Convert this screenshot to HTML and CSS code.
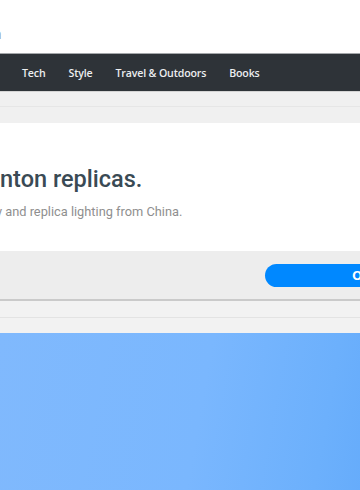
FILE: index.html
```html
<!DOCTYPE html>
<html lang="en">
<head>
<meta charset="utf-8">
<title>Replicas</title>
<link rel="stylesheet" href="styles.css">
</head>
<body>
<header class="masthead">
  <span class="site-title">n</span>
</header>
<nav class="nav">
  <a class="nav-item" href="#">Tech</a>
  <a class="nav-item" href="#">Style</a>
  <a class="nav-item" href="#">Travel &amp; Outdoors</a>
  <a class="nav-item" href="#">Books</a>
</nav>
<div class="band">
  <div class="band-row band-row--top"></div>
  <div class="band-row band-row--bottom"></div>
</div>
<section class="card">
  <h1 class="card-title">nton replicas.</h1>
  <p class="card-sub">y and replica lighting from China.</p>
</section>
<div class="strip">
  <a class="btn" href="#">Open</a>
</div>
<div class="band band--lower">
  <div class="band-row band-row--top2"></div>
  <div class="band-row band-row--bottom2"></div>
</div>
<div class="hero"></div>
</body>
</html>
```
FILE: styles.css
```css
html, body {
  margin: 0;
  padding: 0;
  width: 360px;
  height: 490px;
  overflow: hidden;
  background: #ffffff;
  font-family: "Open Sans", "Liberation Sans", sans-serif;
}

.masthead {
  height: 53px;
  background: #ffffff;
  display: flex;
  align-items: flex-start;
}

.site-title {
  display: block;
  margin-top: 26px;
  margin-left: -7px;
  font-family: "Open Sans", sans-serif;
  font-size: 14px;
  line-height: 16px;
  color: #8a8a8a;
}

.nav {
  height: 37px;
  background: #2e3338;
  border-top: 1px solid #a4a7aa;
  border-bottom: 1px solid #d4d4d4;
  display: flex;
  align-items: center;
  padding-left: 22px;
  gap: 23px;
}

.nav-item {
  color: #eceef0;
  text-decoration: none;
  font-size: 10.6px;
  font-weight: 600;
  line-height: 14px;
  white-space: nowrap;
  letter-spacing: -0.15px;
}

.band {
  background: #f0f0f0;
}

.band-row--top {
  height: 14px;
  border-bottom: 1px solid #e6e6e6;
}

.band-row--bottom {
  height: 16px;
}

.card {
  background: #ffffff;
  height: 128px;
  padding-top: 41px;
  box-sizing: border-box;
  overflow: hidden;
}

.card-title {
  margin: 0;
  font-family: Roboto, "Liberation Sans", sans-serif;
  font-weight: 500;
  font-size: 23.5px;
  line-height: 30px;
  color: #3a4a54;
  white-space: nowrap;
}

.card-sub {
  margin: 9px 0 0 -4px;
  font-family: Roboto, "Liberation Sans", sans-serif;
  font-size: 12.8px;
  line-height: 18px;
  color: #8f8f8f;
  white-space: nowrap;
}

.strip {
  height: 48px;
  background: #ededed;
  border-bottom: 2px solid #cacaca;
  display: flex;
  align-items: flex-start;
  overflow: hidden;
}

.btn {
  display: block;
  flex: none;
  margin-top: 13px;
  margin-left: 265px;
  width: 200px;
  height: 23px;
  box-sizing: border-box;
  padding-left: 87px;
  border-radius: 12px;
  background: #0088ff;
  color: #ffffff;
  font-family: "Open Sans", sans-serif;
  font-weight: 700;
  font-size: 13px;
  line-height: 23px;
  text-decoration: none;
  white-space: nowrap;
}

.band--lower {
  background: #f2f2f2;
}

.band-row--top2 {
  height: 16px;
  border-bottom: 1px solid #e3e3e3;
}

.band-row--bottom2 {
  height: 15px;
}

.hero {
  height: 160px;
  background: linear-gradient(100deg, #80b9fd 0%, #7ab7fe 55%, #6cb0fc 88%, #66acfb 100%);
}
```
